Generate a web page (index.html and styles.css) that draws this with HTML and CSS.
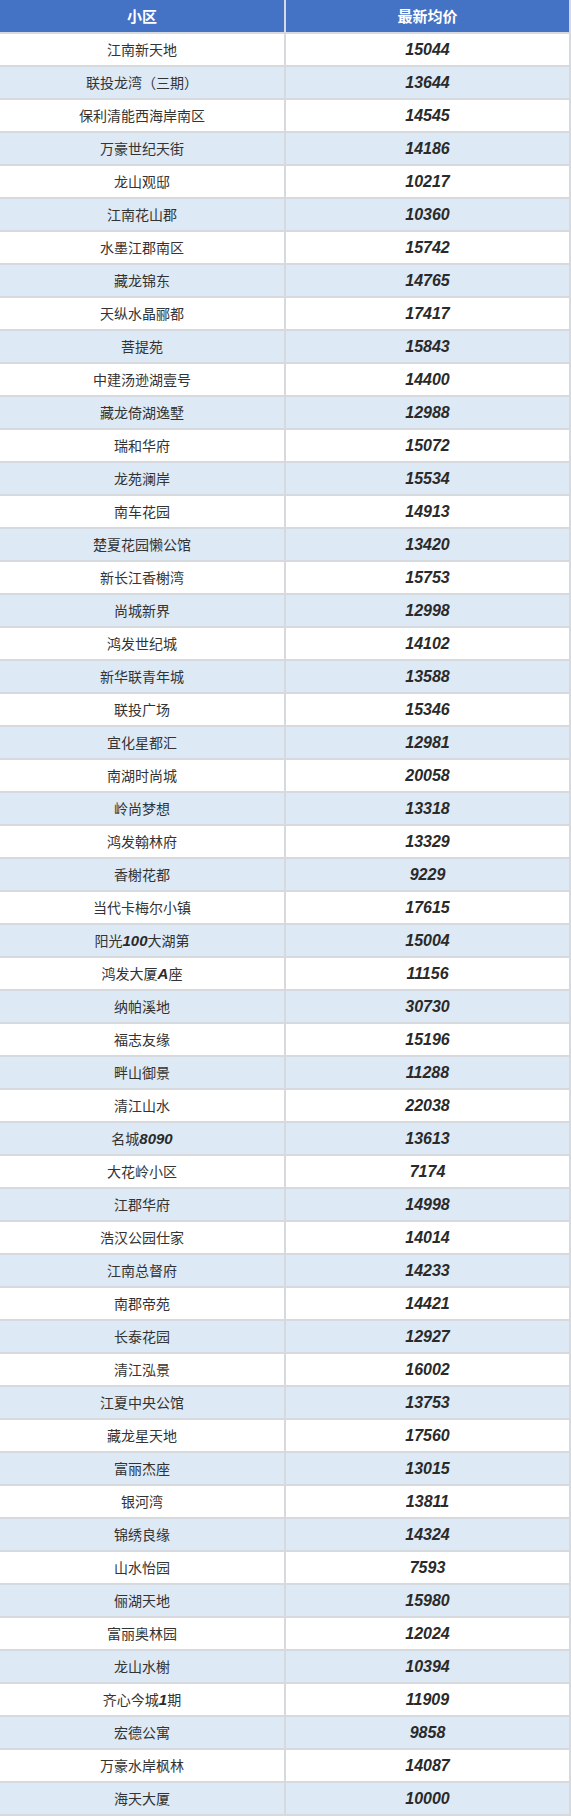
FILE: index.html
```html
<!DOCTYPE html>
<html lang="zh-CN">
<head>
<meta charset="utf-8">
<title>最新均价</title>
<link rel="stylesheet" href="styles.css">
</head>
<body>
<div class="grid">
  <div class="hd">小区</div><div class="hd">最新均价</div>
  <div class="c">江南新天地</div><div class="c p">15044</div>
  <div class="c">联投龙湾（三期）</div><div class="c p">13644</div>
  <div class="c">保利清能西海岸南区</div><div class="c p">14545</div>
  <div class="c">万豪世纪天街</div><div class="c p">14186</div>
  <div class="c">龙山观邸</div><div class="c p">10217</div>
  <div class="c">江南花山郡</div><div class="c p">10360</div>
  <div class="c">水墨江郡南区</div><div class="c p">15742</div>
  <div class="c">藏龙锦东</div><div class="c p">14765</div>
  <div class="c">天纵水晶郦都</div><div class="c p">17417</div>
  <div class="c">菩提苑</div><div class="c p">15843</div>
  <div class="c">中建汤逊湖壹号</div><div class="c p">14400</div>
  <div class="c">藏龙倚湖逸墅</div><div class="c p">12988</div>
  <div class="c">瑞和华府</div><div class="c p">15072</div>
  <div class="c">龙苑澜岸</div><div class="c p">15534</div>
  <div class="c">南车花园</div><div class="c p">14913</div>
  <div class="c">楚夏花园懒公馆</div><div class="c p">13420</div>
  <div class="c">新长江香榭湾</div><div class="c p">15753</div>
  <div class="c">尚城新界</div><div class="c p">12998</div>
  <div class="c">鸿发世纪城</div><div class="c p">14102</div>
  <div class="c">新华联青年城</div><div class="c p">13588</div>
  <div class="c">联投广场</div><div class="c p">15346</div>
  <div class="c">宜化星都汇</div><div class="c p">12981</div>
  <div class="c">南湖时尚城</div><div class="c p">20058</div>
  <div class="c">岭尚梦想</div><div class="c p">13318</div>
  <div class="c">鸿发翰林府</div><div class="c p">13329</div>
  <div class="c">香榭花都</div><div class="c p">9229</div>
  <div class="c">当代卡梅尔小镇</div><div class="c p">17615</div>
  <div class="c">阳光<span class="n">100</span>大湖第</div><div class="c p">15004</div>
  <div class="c">鸿发大厦<span class="n">A</span>座</div><div class="c p">11156</div>
  <div class="c">纳帕溪地</div><div class="c p">30730</div>
  <div class="c">福志友缘</div><div class="c p">15196</div>
  <div class="c">畔山御景</div><div class="c p">11288</div>
  <div class="c">清江山水</div><div class="c p">22038</div>
  <div class="c">名城<span class="n">8090</span></div><div class="c p">13613</div>
  <div class="c">大花岭小区</div><div class="c p">7174</div>
  <div class="c">江郡华府</div><div class="c p">14998</div>
  <div class="c">浩汉公园仕家</div><div class="c p">14014</div>
  <div class="c">江南总督府</div><div class="c p">14233</div>
  <div class="c">南郡帝苑</div><div class="c p">14421</div>
  <div class="c">长泰花园</div><div class="c p">12927</div>
  <div class="c">清江泓景</div><div class="c p">16002</div>
  <div class="c">江夏中央公馆</div><div class="c p">13753</div>
  <div class="c">藏龙星天地</div><div class="c p">17560</div>
  <div class="c">富丽杰座</div><div class="c p">13015</div>
  <div class="c">银河湾</div><div class="c p">13811</div>
  <div class="c">锦绣良缘</div><div class="c p">14324</div>
  <div class="c">山水怡园</div><div class="c p">7593</div>
  <div class="c">俪湖天地</div><div class="c p">15980</div>
  <div class="c">富丽奥林园</div><div class="c p">12024</div>
  <div class="c">龙山水榭</div><div class="c p">10394</div>
  <div class="c">齐心今城<span class="n">1</span>期</div><div class="c p">11909</div>
  <div class="c">宏德公寓</div><div class="c p">9858</div>
  <div class="c">万豪水岸枫林</div><div class="c p">14087</div>
  <div class="c">海天大厦</div><div class="c p">10000</div>
</div>
</body>
</html>
```

FILE: styles.css
```css
html, body {
  margin: 0;
  padding: 0;
  background: #ffffff;
}

.grid {
  display: grid;
  grid-template-columns: 284px 283px;
  grid-template-rows: 32px;
  grid-auto-rows: 31px;
  gap: 2px;
  padding: 0 2px 2px 0;
  width: 571px;
  box-sizing: border-box;
  background: #d6d9dd;
  font-family: "Noto Sans CJK SC", "Liberation Sans", sans-serif;
}

.hd {
  background: #4472c4;
  color: #ffffff;
  font-weight: bold;
  font-size: 15px;
  line-height: 32px;
  text-align: center;
}

.c {
  background: #ffffff;
  color: #333333;
  font-size: 14px;
  line-height: 31px;
  text-align: center;
  white-space: nowrap;
}

.c:nth-child(4n+5),
.c:nth-child(4n+6) {
  background: #dde9f5;
}

.p,
.n {
  font-family: "Liberation Sans", Arial, sans-serif;
  font-weight: bold;
  font-style: italic;
  color: #2a2a2a;
}

.p {
  font-size: 16px;
}

.n {
  font-size: 15px;
}
```
